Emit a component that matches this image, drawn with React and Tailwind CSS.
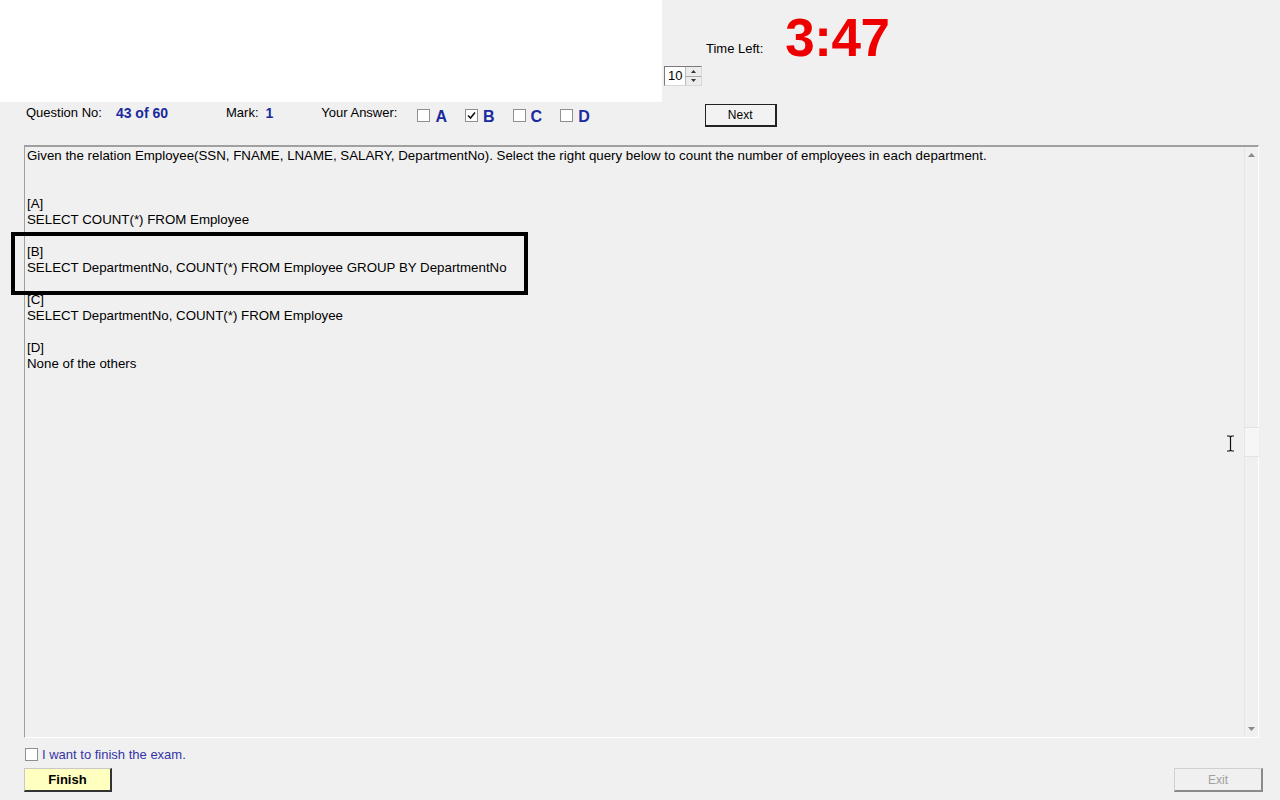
import React from 'react';

const FONT = { fontFamily: '"Liberation Sans", Arial, sans-serif' };

function Check({ checked }) {
	return (
		<span className="w-[13px] h-[13px] border border-[#8e8f8f] bg-white flex items-center justify-center shrink-0">
			{checked && (
				<svg width="9" height="9" viewBox="0 0 9 9">
					<path d="M1 4.5 L3.5 7 L8 1.5" fill="none" stroke="#111" strokeWidth="1.6" />
				</svg>
			)}
		</span>
	);
}

function Choice({ letter, checked, ml }) {
	return (
		<span className={`flex items-center ${ml}`}>
			<Check checked={checked} />
			<span className="ml-[5px] text-[16px] font-bold text-[#1a2a9e] leading-none mt-[3px]">{letter}</span>
		</span>
	);
}

function Spinner() {
	return (
		<div className="ml-[2px] mt-[4px] w-[38px] h-[20px] bg-white border border-t-[#7a7a7a] border-l-[#7a7a7a] border-r-[#d8d8d8] border-b-[#d8d8d8] flex">
			<span className="flex-1 text-[13px] leading-[18px] pl-[3px] text-black">10</span>
			<span className="w-[16px] flex flex-col border-l border-[#bbb]">
				<span className="flex-1 bg-[#ececec] border-b border-[#aaa] flex items-center justify-center">
					<svg width="5" height="3" viewBox="0 0 5 3"><path d="M0 3 L2.5 0 L5 3z" fill="#333" /></svg>
				</span>
				<span className="flex-1 bg-[#ececec] flex items-center justify-center">
					<svg width="5" height="3" viewBox="0 0 5 3"><path d="M0 0 L2.5 3 L5 0z" fill="#333" /></svg>
				</span>
			</span>
		</div>
	);
}

const lines = [
	'Given the relation Employee(SSN, FNAME, LNAME, SALARY, DepartmentNo). Select the right query below to count the number of employees in each department.',
	'',
	'',
	'[A]',
	'SELECT COUNT(*) FROM Employee',
	'',
	'[B]',
	'SELECT DepartmentNo, COUNT(*) FROM Employee GROUP BY DepartmentNo',
	'',
	'[C]',
	'SELECT DepartmentNo, COUNT(*) FROM Employee',
	'',
	'[D]',
	'None of the others',
];

export default function App() {
	return (
		<div className="w-[1280px] h-[800px] bg-[#f0f0f0] relative overflow-hidden text-black" style={FONT}>
			{/* top area */}
			<div className="flex h-[102px]">
				<div className="w-[662px] h-[102px] bg-white" />
				<div className="flex flex-col">
					<div className="flex items-end h-[62px]">
						<span className="ml-[44px] mb-[7px] text-[13px] leading-none">Time Left:</span>
						<span className="ml-[22px] mb-[-2px] text-[53px] font-bold text-[#ee0000] leading-none tracking-[-0.5px]">3:47</span>
					</div>
					<Spinner />
				</div>
			</div>

			{/* question row */}
			<div className="flex items-start h-[43px] text-[13px]">
				<span className="ml-[26px] mt-[4px] leading-none">Question No:</span>
				<span className="ml-[14px] mt-[4px] leading-none text-[14px] font-bold text-[#1a2a9e]">43 of 60</span>
				<span className="ml-[58px] mt-[4px] leading-none">Mark:</span>
				<span className="ml-[7px] mt-[4px] leading-none text-[14px] font-bold text-[#1a2a9e]">1</span>
				<span className="ml-[48px] mt-[4px] leading-none">Your Answer:</span>
				<span className="flex mt-[4px]">
					<Choice letter="A" ml="ml-[20px]" />
					<Choice letter="B" checked ml="ml-[18px]" />
					<Choice letter="C" ml="ml-[18px]" />
					<Choice letter="D" ml="ml-[18px]" />
				</span>
				<button className="ml-[115px] mt-[2px] w-[72px] h-[23px] bg-[#f2f2f2] border border-[#222] border-r-2 border-b-2 text-[12px] leading-none">
					Next
				</button>
			</div>

			{/* question box */}
			<div className="ml-[24px] w-[1235px] h-[593px] flex border-t-2 border-l border-t-[#a0a0a0] border-l-[#a0a0a0] border-r border-b border-r-white border-b-white">
				<div className="flex-1 pl-[2px] pt-[1px] text-[13.3px] leading-[16px]">
					{lines.map((l, i) => (
						<div key={i} className="h-[16px] whitespace-pre">{l}</div>
					))}
				</div>
				<div className="w-[14px] flex flex-col border-l border-[#e6e6e6] bg-[#f0f0f0]">
					<div className="h-[16px] flex items-center justify-center">
						<svg width="7" height="4" viewBox="0 0 7 4"><path d="M0 4 L3.5 0 L7 4z" fill="#8a8a8a" /></svg>
					</div>
					<div className="flex-1 flex flex-col justify-center">
						<div className="h-[30px] w-[14px] bg-[#f6f6f6] border-y border-[#e3e3e3]" />
					</div>
					<div className="h-[16px] flex items-center justify-center">
						<svg width="7" height="4" viewBox="0 0 7 4"><path d="M0 0 L3.5 4 L7 0z" fill="#8a8a8a" /></svg>
					</div>
				</div>
			</div>

			{/* bottom */}
			<div className="flex items-center ml-[25px] mt-[10px] h-[13px]">
				<Check />
				<span className="ml-[4px] text-[13px] text-[#3535a5] leading-none">I want to finish the exam.</span>
			</div>
			<div className="flex mt-[7px]">
				<button className="ml-[24px] w-[88px] h-[24px] bg-[#ffffc0] border border-[#c8c8c8] border-r-2 border-b-2 border-r-[#333] border-b-[#333] text-[13px] font-bold leading-none">
					Finish
				</button>
				<button className="ml-[1062px] w-[89px] h-[24px] bg-[#f0f0f0] border border-[#d0d0d0] border-r-2 border-b-2 border-r-[#8a8a8a] border-b-[#8a8a8a] text-[12px] text-[#a0a0a0] leading-none">
					Exit
				</button>
			</div>

			{/* highlight rectangle */}
			<div className="absolute left-[11px] top-[232px] w-[517px] h-[63px] border-4 border-black pointer-events-none" />

			{/* text cursor */}
			<svg className="absolute left-[1226px] top-[435px]" width="9" height="17" viewBox="0 0 9 17">
				<path d="M1 1 H3.5 M5.5 1 H8 M4.5 1.5 V15.5 M1 16 H3.5 M5.5 16 H8 M3.5 1 L4.5 2 L5.5 1 M3.5 16 L4.5 15 L5.5 16" stroke="#111" strokeWidth="1.2" fill="none" />
			</svg>
		</div>
	);
}
